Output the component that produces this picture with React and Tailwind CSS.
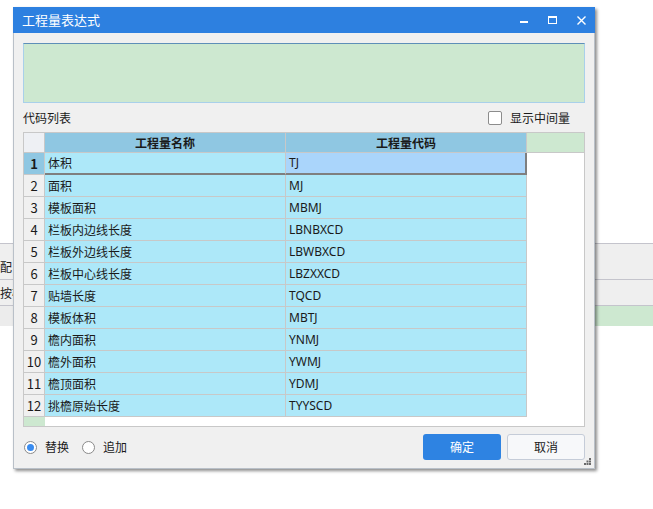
import React from "react";

const ROWS = [
  ["体积", "TJ"],
  ["面积", "MJ"],
  ["模板面积", "MBMJ"],
  ["栏板内边线长度", "LBNBXCD"],
  ["栏板外边线长度", "LBWBXCD"],
  ["栏板中心线长度", "LBZXXCD"],
  ["贴墙长度", "TQCD"],
  ["模板体积", "MBTJ"],
  ["檐内面积", "YNMJ"],
  ["檐外面积", "YWMJ"],
  ["檐顶面积", "YDMJ"],
  ["挑檐原始长度", "TYYSCD"],
];

const FONT = "font-['Microsoft_YaHei','Noto_Sans_CJK_SC',sans-serif]";

function TitleButtons() {
  return (
    <div className="flex items-center gap-[20px] pr-[9px]">
      <svg width="8" height="8" viewBox="0 0 8 8">
        <rect x="0" y="5" width="8" height="2" fill="#fff" />
      </svg>
      <svg width="9" height="8" viewBox="0 0 9 8">
        <rect x="0.5" y="0.5" width="8" height="7" fill="none" stroke="#fff" />
        <rect x="0" y="0" width="9" height="2" fill="#fff" />
      </svg>
      <svg width="9" height="9" viewBox="0 0 9 9">
        <path d="M0.5 0.5 L8.5 8.5 M8.5 0.5 L0.5 8.5" stroke="#fff" strokeWidth="1.4" />
      </svg>
    </div>
  );
}

function Radio({ on, label }) {
  return (
    <div className="flex items-center gap-[8px]">
      <div className="w-[13px] h-[13px] rounded-full border border-[#8a8a8a] bg-white flex items-center justify-center">
        {on && <div className="w-[7px] h-[7px] rounded-full bg-[#3a8cf0]" />}
      </div>
      <span className="text-[12px] text-[#1a1a1a]">{label}</span>
    </div>
  );
}

export default function App() {
  return (
    <div className={`relative w-[653px] h-[509px] bg-white overflow-hidden ${FONT}`}>
      {/* background app rows */}
      <div className="pt-[243px]">
        <div className="border-t border-[#c4c4cc] h-[36px] bg-[#efefef] flex items-end">
          <span className="text-[12px] text-[#222] mb-[3px]">配</span>
        </div>
        <div className="border-t border-[#c4c4cc] h-[26px] bg-[#efefef] flex items-center">
          <span className="text-[12px] text-[#222]">按构</span>
        </div>
        <div className="border-t border-[#c4c4cc] h-[21px] flex">
          <div className="w-[13px] bg-[#ececec]" />
          <div className="flex-1 bg-[#cde8d0]" />
        </div>
      </div>

      {/* dialog */}
      <div className="absolute left-[13px] top-[7px] w-[582px] h-[462px] bg-[#f0f0f0] border border-[#b9c0c8] border-t-0 shadow-[2px_2px_3px_rgba(0,0,0,0.45)] flex flex-col">
        <div className="h-[26px] bg-[#2d80e0] flex items-center justify-between -mx-px">
          <span className="pl-[9px] text-[13px] text-white">工程量表达式</span>
          <TitleButtons />
        </div>

        <div className="px-[9px] pt-[10px] flex flex-col flex-1">
          <div className="h-[60px] bg-[#cde8d0] border border-[#a9d0ea] border-t-[#5e8fb8]" />

          <div className="h-[29px] flex items-center justify-between">
            <span className="text-[12px] text-[#1a1a1a]">代码列表</span>
            <div className="flex items-center gap-[8px] pr-[15px]">
              <div className="w-[14px] h-[14px] rounded-[2px] border border-[#8c8c8c] bg-white" />
              <span className="text-[12px] text-[#1a1a1a]">显示中间量</span>
            </div>
          </div>

          <div className="border border-[#c8c8c8] bg-white h-[295px] flex flex-col text-[12px] text-[#1a1a1a]">
            <div className="flex h-[20px] border-b border-[#c8c8c8]">
              <div className="w-[21px] bg-[#eef0f4] border-r border-[#c8c8c8]" />
              <div className="w-[241px] bg-[#8fc7e2] border-r border-[#c8c8c8] flex items-center justify-center font-bold">工程量名称</div>
              <div className="w-[241px] bg-[#8fc7e2] border-r border-[#c8c8c8] flex items-center justify-center font-bold">工程量代码</div>
              <div className="flex-1 bg-[#cde8d0]" />
            </div>
            {ROWS.map(([name, code], i) => {
              const sel = i === 0;
              return (
                <div key={code} className="flex h-[22px]">
                  <div
                    className={`w-[21px] border-r border-b border-[#c8c8c8] flex items-center justify-center ${
                      sel ? "bg-[#8fc7e2] font-bold text-[13px]" : "bg-[#f0f0f0] text-[13px]"
                    }`}
                  >
                    {i + 1}
                  </div>
                  <div
                    className={`w-[241px] bg-[#ade8f9] border-r pl-[3px] flex items-center ${
                      sel ? "border-b-2 border-b-[#7f7f7f] border-r-[#c8c8c8]" : "border-b border-[#c8c8c8]"
                    }`}
                  >
                    {name}
                  </div>
                  <div
                    className={`w-[241px] pl-[3px] flex items-center ${
                      sel
                        ? "bg-[#aad5fb] border-b-2 border-r-2 border-[#7f7f7f]"
                        : "bg-[#ade8f9] border-b border-r border-[#c8c8c8]"
                    }`}
                  >
                    <span className="font-['Noto_Sans',sans-serif]">{code}</span>
                  </div>
                  <div className="flex-1 bg-white" />
                </div>
              );
            })}
            <div className="flex flex-1">
              <div className="w-[21px] bg-[#cde8d0]" />
              <div className="flex-1 bg-white" />
            </div>
          </div>

          <div className="flex-1 flex items-center justify-between pb-[1px]">
            <div className="flex items-center gap-[13px] pl-px">
              <Radio on label="替换" />
              <Radio label="追加" />
            </div>
            <div className="flex gap-[6px]">
              <button className="w-[78px] h-[26px] rounded-[3px] bg-[#2e83e2] text-white text-[12px]">确定</button>
              <button className="w-[78px] h-[26px] rounded-[3px] bg-[#f7f8fa] border border-[#c5ccd8] text-[#1a1a1a] text-[12px]">取消</button>
            </div>
          </div>
        </div>

        <svg className="absolute right-[3px] bottom-[3px]" width="7" height="7" viewBox="0 0 7 7">
          <rect x="5" y="0" width="2" height="2" fill="#6a6a6a" />
          <rect x="2.5" y="2.5" width="2" height="2" fill="#6a6a6a" />
          <rect x="5" y="2.5" width="2" height="2" fill="#6a6a6a" />
          <rect x="0" y="5" width="2" height="2" fill="#6a6a6a" />
          <rect x="2.5" y="5" width="2" height="2" fill="#6a6a6a" />
          <rect x="5" y="5" width="2" height="2" fill="#6a6a6a" />
        </svg>
      </div>
    </div>
  );
}
